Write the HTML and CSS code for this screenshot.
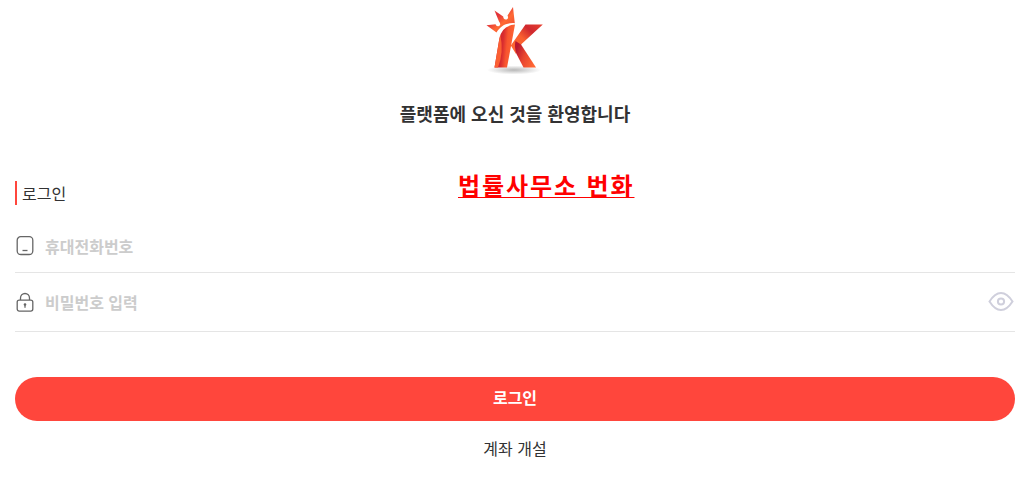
FILE: index.html
```
<!DOCTYPE html>
<html lang="ko">
<head>
    <meta charset="UTF-8">
    <meta name="viewport" content="width=device-width, initial-scale=1.0">
    <title>로그인</title>
    <link rel="stylesheet" href="styles.css">
</head>
<body>

<div class="container">
    <div class="logo">
        <svg width="80" height="80" viewBox="0 0 80 80">
            <defs>
                <linearGradient id="crown" x1="0" y1="0" x2="1" y2="1">
                    <stop offset="0" stop-color="#ff5a35"/>
                    <stop offset="0.35" stop-color="#e0303a"/>
                    <stop offset="0.6" stop-color="#ff6a35"/>
                    <stop offset="1" stop-color="#e63f30"/>
                </linearGradient>
                <linearGradient id="stem" x1="0" y1="0.4" x2="1" y2="0.6">
                    <stop offset="0.1" stop-color="#c9202f"/>
                    <stop offset="0.4" stop-color="#d92d2f"/>
                    <stop offset="0.6" stop-color="#f8552f"/>
                    <stop offset="1" stop-color="#ff6a35"/>
                </linearGradient>
                <linearGradient id="arm" x1="0" y1="1" x2="1" y2="0">
                    <stop offset="0" stop-color="#ff6a35"/>
                    <stop offset="0.45" stop-color="#f9602f"/>
                    <stop offset="0.7" stop-color="#cf282f"/>
                    <stop offset="1" stop-color="#e8402f"/>
                </linearGradient>
                <linearGradient id="leg" x1="0" y1="0.2" x2="1" y2="0.7">
                    <stop offset="0.1" stop-color="#b8182f"/>
                    <stop offset="0.5" stop-color="#e8452f"/>
                    <stop offset="1" stop-color="#ff6733"/>
                </linearGradient>
                <radialGradient id="shadow">
                    <stop offset="0" stop-color="#888" stop-opacity="0.6"/>
                    <stop offset="1" stop-color="#888" stop-opacity="0"/>
                </radialGradient>
            </defs>
            <ellipse cx="39" cy="70" rx="27" ry="4.500" fill="url(#shadow)"/>
            <path fill="url(#crown)" d="M11.500 25.300L20.500 24.300Q21.500 27 24 26Q26.500 24.500 24 21.500L19.500 10.500L28.200 16.500Q28.500 20 31.500 19.500Q34 18.500 32.500 15.500L38 7L39.800 23.200C31 22.500 25.500 26 21.500 32.500Z"/>
            <path fill="url(#stem)" d="M40 24.500L32 67.500H19.500L24.300 39Q26.500 25.500 40 24.500Z"/>
            <path fill="#fb6033" d="M24.300 39L19.500 67.500H23Q29 52 25.300 34.500Z"/>
            <path fill="url(#arm)" d="M50.500 24.500H67.800L46 44.500L41 54L35.800 45.500Z"/>
            <path fill="url(#leg)" d="M40.500 41L46 44.500L61 67.500H48.500L41.500 54Q39 47 40.500 41Z"/>
        </svg>
    </div>
    <h1>플랫폼에 오신 것을 환영합니다</h1>

    <div class="tabs">
        <span class="tab">로그인</span>
        <a class="office">법률사무소 번화</a>
    </div>

    <form id="loginForm">
        <div class="field phone">
            <svg class="icon" width="20" height="22" viewBox="0 0 20 22">
                <rect x="2.200" y="1.700" width="15.600" height="17.800" rx="3.500"/>
                <path d="M7.500 15.500H12.500"/>
            </svg>
            <input type="text" name="phone" placeholder="휴대전화번호">
        </div>
        <div class="field password">
            <svg class="icon" width="20" height="22" viewBox="0 0 20 22">
                <rect x="2.200" y="9.100" width="15.600" height="11" rx="2"/>
                <path d="M5.500 9V7A4.500 4.500 0 0 1 14.500 7V9"/>
                <path d="M10 13.500V16.700"/>
                <circle class="dot" cx="10" cy="13.500" r="1.300"/>
            </svg>
            <input type="password" name="password" placeholder="비밀번호 입력">
            <svg class="eye" width="26" height="22" viewBox="0 0 26 22">
                <path d="M1.500 10.500C5 5 9 2 13 2S21 5 24.500 10.500C21 16 17 19 13 19S5 16 1.500 10.500Z"/>
                <circle cx="13" cy="10.500" r="3.100"/>
            </svg>
        </div>
        <button type="button">로그인</button>
    </form>
    <a class="register">계좌 개설</a>
</div>

</body>
</html>
```

FILE: styles.css
```
* {
    box-sizing: border-box;
}
body {
    margin: 0;
    background-color: #fff;
    color: #323233;
    font-family: "Noto Sans CJK KR", sans-serif;
    font-size: 16px;
}
.container {
    padding: 0 19px 0 15px;
}
.logo {
    height: 80px;
    text-align: center;
}
.logo svg {
    display: block;
    margin: 0 auto;
}
h1 {
    margin: 19px 0 0;
    font-size: 18px;
    line-height: 28px;
    text-align: center;
}
.tabs {
    display: flex;
    height: 91px;
    padding-top: 40px;
}
.tab {
    width: 443px;
    height: 24px;
    margin-top: 14px;
    padding-left: 5px;
    border-left: 2px solid #ff463c;
    line-height: 24px;
}
.office {
    height: 36px;
    color: #ff0000;
    font-size: 24px;
    font-weight: bold;
    letter-spacing: 1.9px;
    line-height: 36px;
    text-decoration: underline;
    text-decoration-thickness: 1px;
    text-underline-offset: 2px;
}
.field {
    display: flex;
    align-items: center;
    height: 55px;
    border-bottom: 1px solid #e5e5e5;
}
.field.phone {
    padding-top: 2px;
}
.field.password {
    height: 59px;
}
.icon {
    fill: none;
    stroke: #666;
    stroke-width: 1.3;
}
.icon .dot {
    fill: #666;
    stroke: none;
}
.eye {
    margin-right: 1px;
    fill: none;
    stroke: #cfcfdc;
    stroke-width: 2;
}
input {
    flex: 1;
    height: 30px;
    margin-left: 10px;
    padding: 0;
    border: none;
    outline: none;
    background: none;
    font-family: inherit;
    font-size: 16px;
    font-weight: bold;
}
input::placeholder {
    color: #ccc;
}
button {
    display: block;
    width: 100%;
    height: 44px;
    margin-top: 45px;
    padding: 0 0 4px;
    border: none;
    border-radius: 22px;
    background-color: #ff463c;
    color: white;
    font-family: inherit;
    font-size: 16px;
    font-weight: bold;
    cursor: pointer;
}
.register {
    display: block;
    margin-top: 15px;
    line-height: 24px;
    text-align: center;
}
```
